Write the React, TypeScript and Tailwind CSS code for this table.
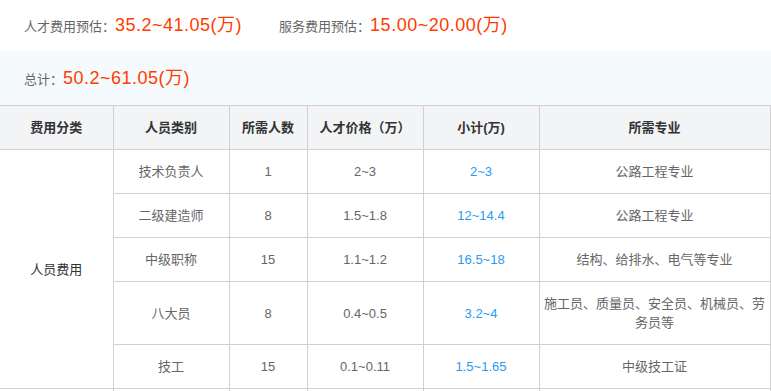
import React from 'react'

const font = "font-['Liberation_Sans','Noto_Sans_CJK_SC',sans-serif]"

const rows = [
    { type: '技术负责人', num: '1', price: '2~3', sub: '2~3', major: '公路工程专业' },
    { type: '二级建造师', num: '8', price: '1.5~1.8', sub: '12~14.4', major: '公路工程专业' },
    { type: '中级职称', num: '15', price: '1.1~1.2', sub: '16.5~18', major: '结构、给排水、电气等专业' },
    { type: '八大员', num: '8', price: '0.4~0.5', sub: '3.2~4', major: '施工员、质量员、安全员、机械员、劳\n务员等' },
    { type: '技工', num: '15', price: '0.1~0.11', sub: '1.5~1.65', major: '中级技工证' },
]

const td = 'border border-[#d0d0d0] px-[3px] py-3 text-center leading-[19px]'

const App = () => {
    return (
        <div className={`w-[771px] bg-white text-[13px] text-[#666] ${font}`}>
            <div className='flex items-center h-[51px] pl-6'>
                <span className='flex items-baseline mr-[37px]'>
                    人才费用预估：<span className='text-[18px] tracking-[0.5px] text-[#ff3c00]'>35.2~41.05(万)</span>
                </span>
                <span className='flex items-baseline'>
                    服务费用预估：<span className='text-[18px] tracking-[0.5px] text-[#ff3c00]'>15.00~20.00(万)</span>
                </span>
            </div>
            <div className='flex items-center h-[54px] pl-6 bg-[#f5fafc]'>
                <span className='flex items-baseline'>
                    总计：<span className='text-[18px] tracking-[0.5px] text-[#ff3c00]'>50.2~61.05(万)</span>
                </span>
            </div>
            <table className='w-[770px] table-fixed border-collapse'>
                <colgroup>
                    <col className='w-[113px]' />
                    <col className='w-[116px]' />
                    <col className='w-[78px]' />
                    <col className='w-[116px]' />
                    <col className='w-[116px]' />
                    <col className='w-[231px]' />
                </colgroup>
                <thead>
                    <tr className='bg-[#f2f4f6] text-[#333] font-bold'>
                        <th className={`${td} border-l-0`}>费用分类</th>
                        <th className={td}>人员类别</th>
                        <th className={td}>所需人数</th>
                        <th className={td}>人才价格（万）</th>
                        <th className={td}>小计(万)</th>
                        <th className={td}>所需专业</th>
                    </tr>
                </thead>
                <tbody>
                    {rows.map((r, i) => (
                        <tr key={i}>
                            {i === 0 && (
                                <td rowSpan={5} className={`${td} border-l-0 text-[#333]`}>人员费用</td>
                            )}
                            <td className={td}>{r.type}</td>
                            <td className={td}>{r.num}</td>
                            <td className={td}>{r.price}</td>
                            <td className={`${td} text-[#2a9bf0]`}>{r.sub}</td>
                            <td className={`${td} whitespace-pre-line`}>{r.major}</td>
                        </tr>
                    ))}
                    <tr className='h-[44px]'>
                        <td className={`${td} border-l-0`}></td>
                        <td className={td}></td>
                        <td className={td}></td>
                        <td className={td}></td>
                        <td className={td}></td>
                        <td className={td}></td>
                    </tr>
                </tbody>
            </table>
        </div>
    )
}

export default App
